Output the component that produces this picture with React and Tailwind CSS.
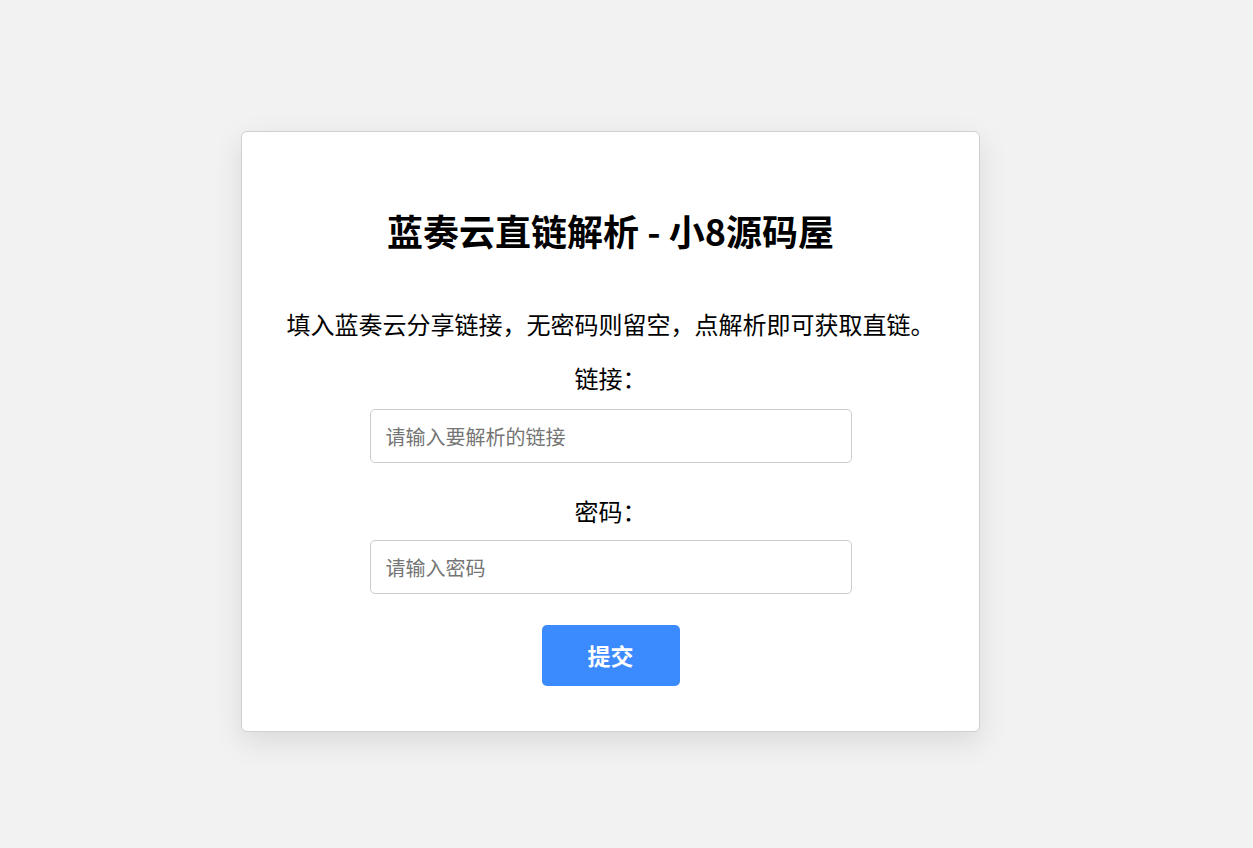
import React from 'react';

const font = { fontFamily: '"Microsoft YaHei", "Noto Sans CJK SC", "Noto Sans", sans-serif' };

export default function App() {
    return (
        <div className="min-h-screen bg-[#f2f2f2] flex justify-center pt-[131px] pr-[32px]" style={font}>
            <div className="w-[739px] h-[601px] bg-white border border-[#d0d0d0] rounded-[6px] shadow-[0_10px_30px_rgba(0,0,0,0.1)] flex flex-col items-center pt-[76px] pb-[44px] text-black">
                <h1 className="text-[36px] leading-[44px] font-bold">蓝奏云直链解析 - 小8源码屋</h1>
                <p className="mt-[56px] text-[24px] leading-[32px]">填入蓝奏云分享链接，无密码则留空，点解析即可获取直链。</p>

                <label className="mt-[22px] text-[24px] leading-[32px]">链接：</label>
                <input
                    type="text"
                    placeholder="请输入要解析的链接"
                    className="mt-[15px] w-[482px] h-[54px] border border-[#cccccc] rounded-[5px] px-[15px] text-[20px] placeholder:text-[#757575] outline-none"
                />

                <label className="mt-[32px] text-[24px] leading-[32px]">密码：</label>
                <input
                    type="text"
                    placeholder="请输入密码"
                    className="mt-[13px] w-[482px] h-[54px] border border-[#cccccc] rounded-[5px] px-[15px] text-[20px] placeholder:text-[#757575] outline-none"
                />

                <button className="mt-[31px] w-[138px] h-[61px] rounded-[5px] bg-[#3c8bfe] text-white text-[23px] font-bold">
                    提交
                </button>
            </div>
        </div>
    );
}
